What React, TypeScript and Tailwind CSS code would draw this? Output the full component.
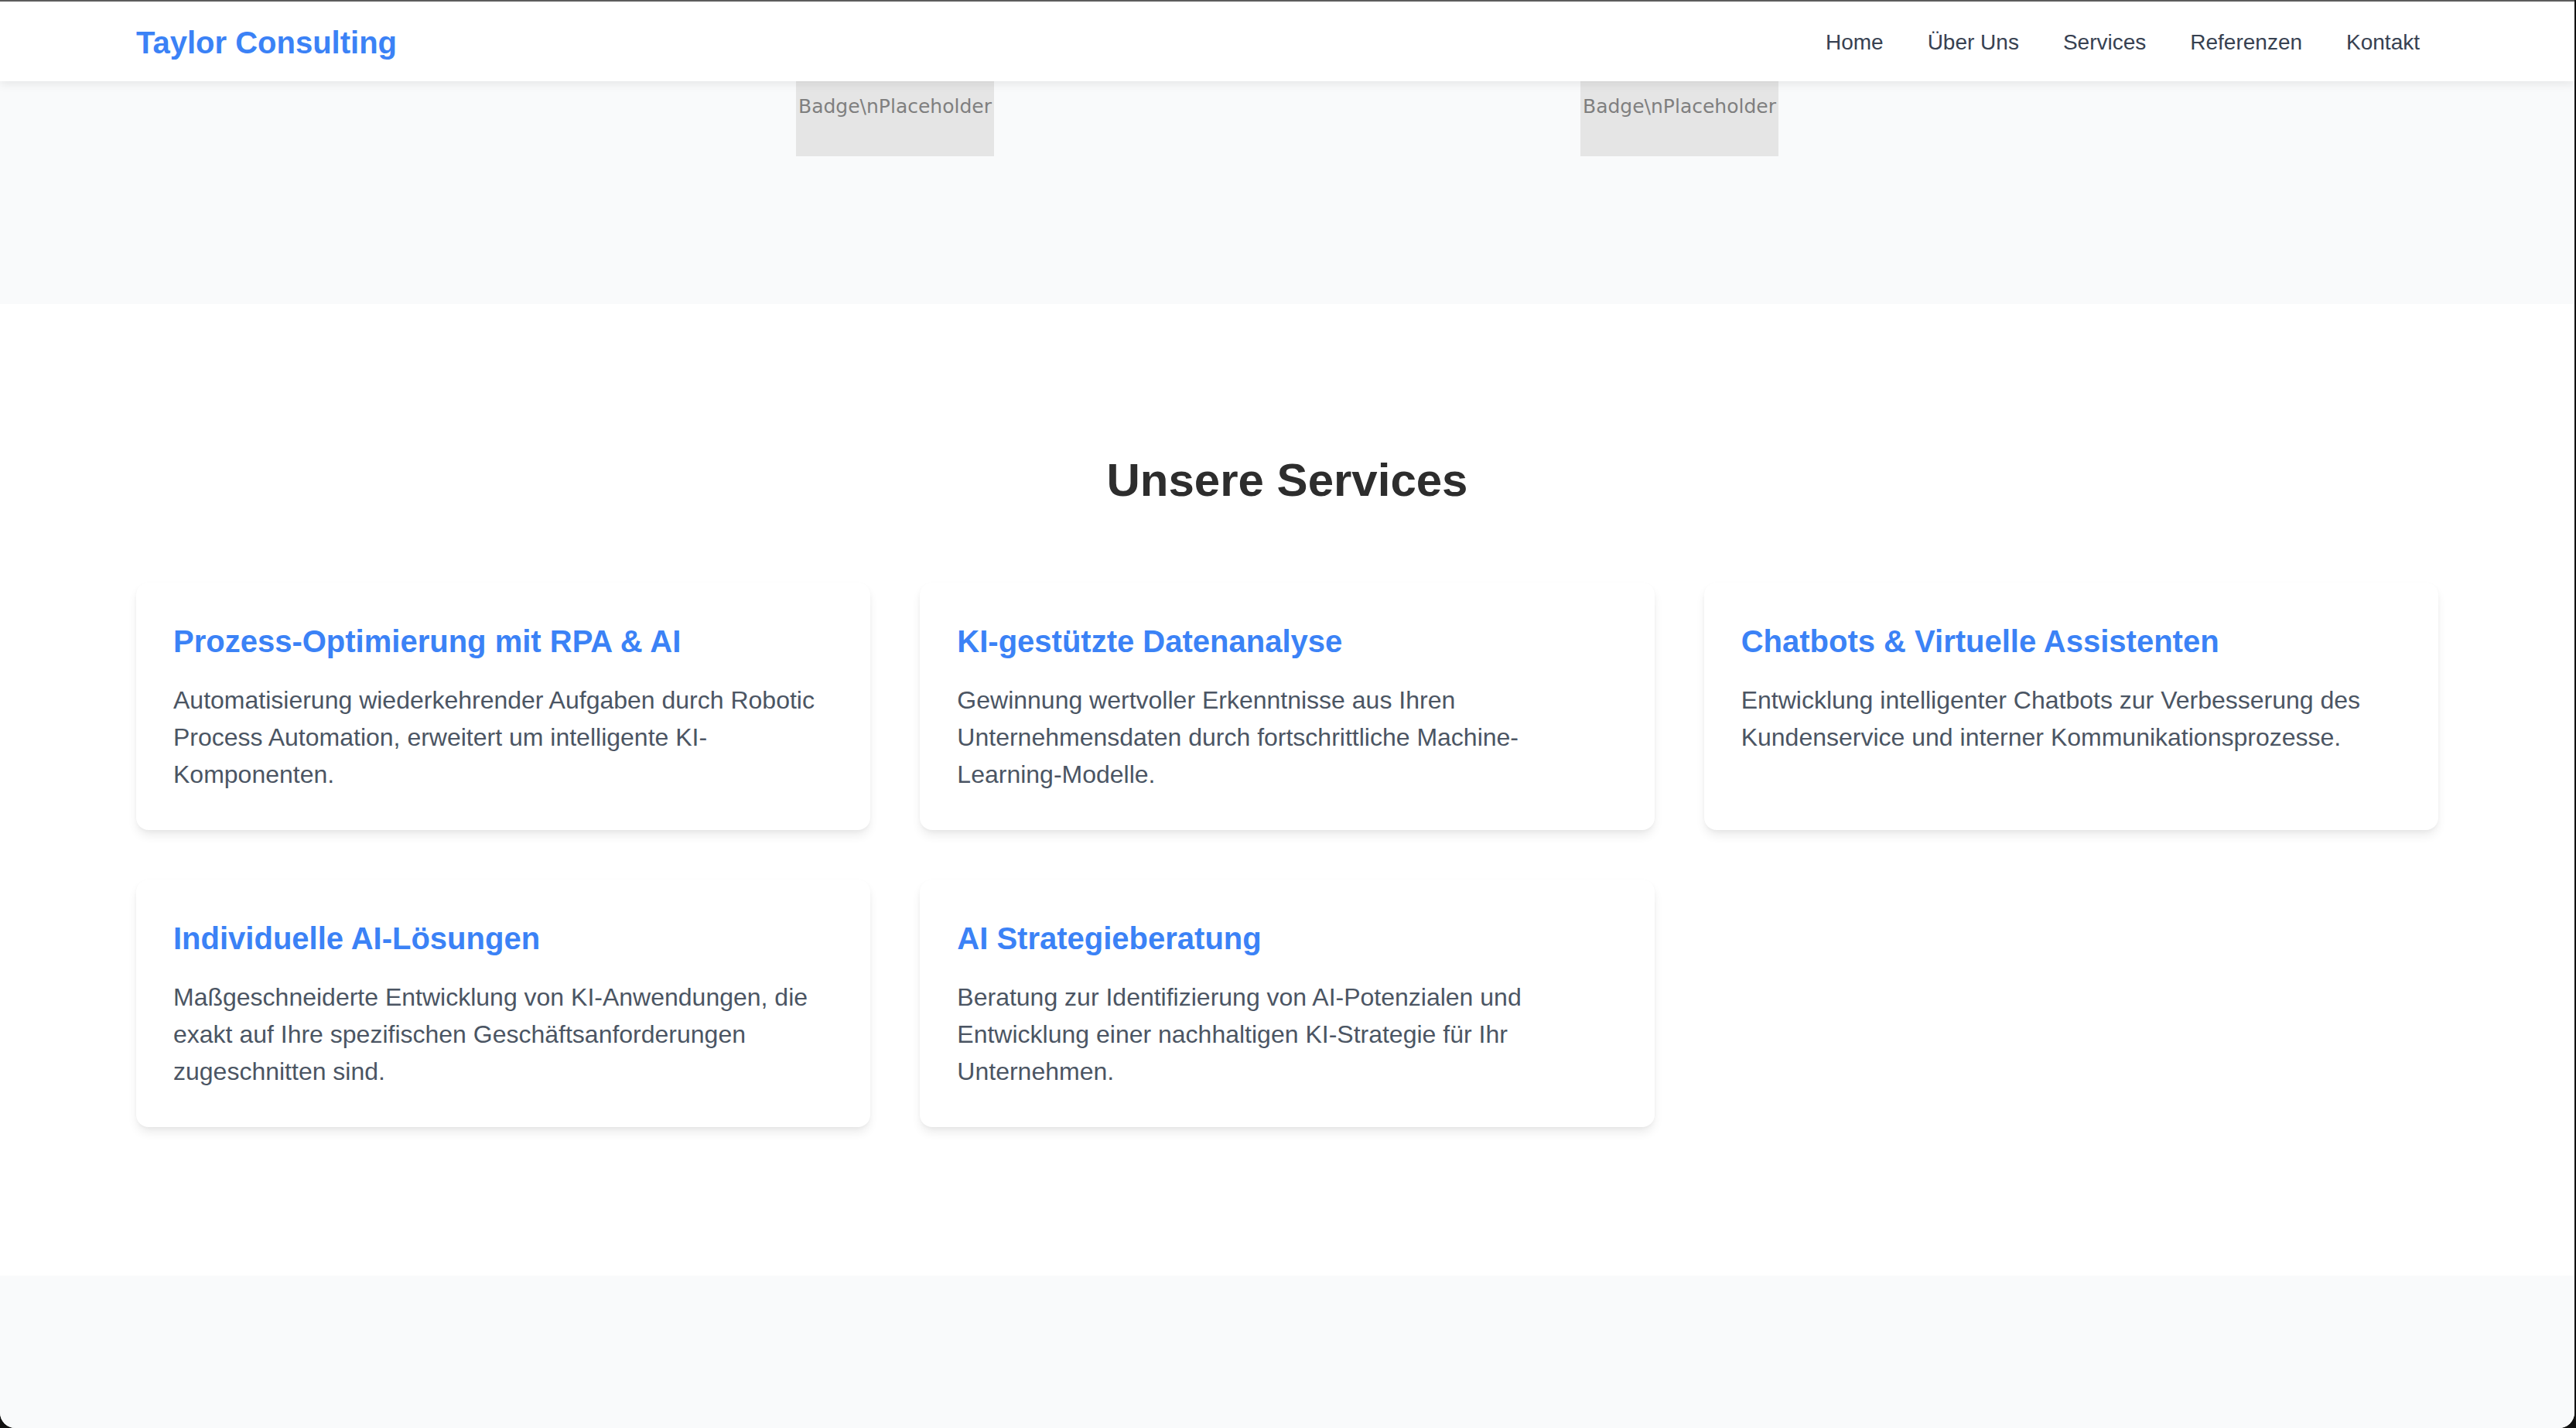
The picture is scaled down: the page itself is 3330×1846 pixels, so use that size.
import React from 'react';

const services = [
  {
    title: 'Prozess-Optimierung mit RPA & AI',
    text: 'Automatisierung wiederkehrender Aufgaben durch Robotic Process Automation, erweitert um intelligente KI-Komponenten.',
  },
  {
    title: 'KI-gestützte Datenanalyse',
    text: 'Gewinnung wertvoller Erkenntnisse aus Ihren Unternehmensdaten durch fortschrittliche Machine-Learning-Modelle.',
  },
  {
    title: 'Chatbots & Virtuelle Assistenten',
    text: 'Entwicklung intelligenter Chatbots zur Verbesserung des Kundenservice und interner Kommunikationsprozesse.',
  },
  {
    title: 'Individuelle AI-Lösungen',
    text: 'Maßgeschneiderte Entwicklung von KI-Anwendungen, die exakt auf Ihre spezifischen Geschäftsanforderungen zugeschnitten sind.',
  },
  {
    title: 'AI Strategieberatung',
    text: 'Beratung zur Identifizierung von AI-Potenzialen und Entwicklung einer nachhaltigen KI-Strategie für Ihr Unternehmen.',
  },
];

const navLinks = ['Home', 'Über Uns', 'Services', 'Referenzen', 'Kontakt'];

function Badge() {
  return (
    <div className="w-[256px] h-[97px] bg-[#e5e5e5] overflow-hidden flex justify-center pt-[18px]">
      <span className="whitespace-nowrap text-[25px] leading-[30px] text-[#7f7f7f] font-['DejaVu_Sans',sans-serif]">
        Badge\nPlaceholder
      </span>
    </div>
  );
}

function ServiceCard({ title, text }: { title: string; text: string }) {
  return (
    <div className="bg-white rounded-[16px] p-[48px] shadow-[0_8px_14px_-2px_rgba(0,0,0,0.09),0_2px_6px_-2px_rgba(0,0,0,0.06)]">
      <h3 className="text-[40px] leading-[56px] font-bold text-[#3b82f6] mb-[24px]">{title}</h3>
      <p className="text-[32px] leading-[48px] text-[#4b5563]">{text}</p>
    </div>
  );
}

export default function App() {
  return (
    <div className="w-full h-[1846px] bg-[#111111] overflow-hidden font-['Liberation_Sans',Arial,sans-serif]">
      <div className="mr-[2px] h-full flex flex-col bg-white border-t-2 border-[#5c5c5c] rounded-b-[20px] overflow-hidden">
        <header className="relative z-10 h-[103px] shrink-0 bg-white shadow-[0_4px_12px_rgba(0,0,0,0.08)]">
          <div className="w-[2976px] mx-auto h-full pt-[3px] flex items-center justify-between">
            <a className="text-[40px] leading-[56px] font-bold text-[#3b82f6]">Taylor Consulting</a>
            <nav className="flex gap-[57px] pr-[24px]">
              {navLinks.map((l) => (
                <a key={l} className="text-[28px] leading-[40px] text-[#374151]">
                  {l}
                </a>
              ))}
            </nav>
          </div>
        </header>

        <section className="h-[288px] shrink-0 bg-[#f9fafb]">
          <div className="flex justify-center gap-[758px]">
            <Badge />
            <Badge />
          </div>
        </section>

        <section className="shrink-0 bg-white py-[192px]">
          <div className="w-[2976px] mx-auto">
            <h2 className="text-[60px] leading-[72px] font-bold text-center text-[#2d2d2d] mb-[96px]">
              Unsere Services
            </h2>
            <div className="grid grid-cols-3 gap-[64px]">
              {services.map((s) => (
                <ServiceCard key={s.title} title={s.title} text={s.text} />
              ))}
            </div>
          </div>
        </section>

        <section className="flex-1 bg-[#f9fafb]" />
      </div>
    </div>
  );
}
